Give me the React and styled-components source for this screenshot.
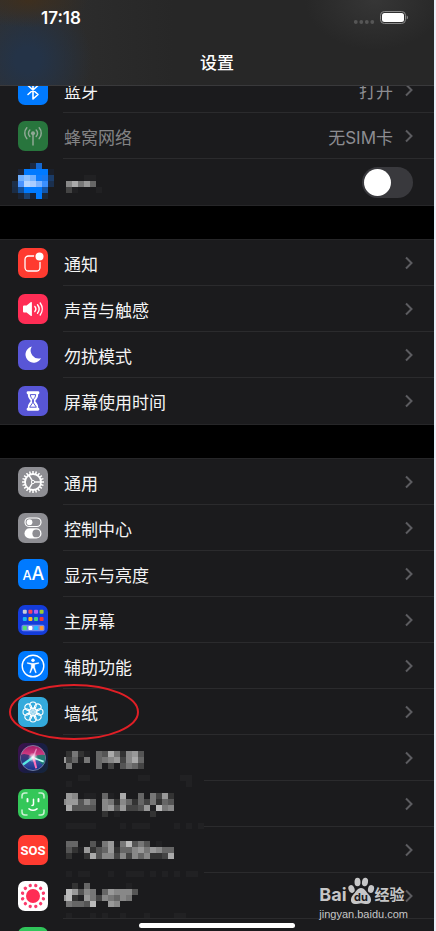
import React from 'react'
import styled, { createGlobalStyle } from 'styled-components'

const GlobalStyle = createGlobalStyle`
  * {
    box-sizing: border-box;
  }
  body {
    margin: 0;
    background: #e9effa;
    font-family: Inter, "Noto Sans CJK SC", sans-serif;
  }
`

const Phone = styled.div`
  position: relative;
  display: flex;
  flex-direction: column;
  height: 100vh;
  margin-right: 2px;
  overflow: hidden;
  background: #000;
  color: #f4f4f5;
`

const Header = styled.header`
  position: relative;
  z-index: 1;
  flex: none;
  border-bottom: 1px solid #39393b;
  background:
    radial-gradient(ellipse 60px 28px at 28px 0, #3e2f1e, transparent),
    radial-gradient(ellipse 64px 64px at 28px 60px, #243347 20%, transparent),
    radial-gradient(ellipse 70px 50px at 375px 0, #363636, transparent),
    linear-gradient(90deg, #303030, #272727 40%, #272727);
`

const StatusBar = styled.div`
  display: flex;
  align-items: center;
  justify-content: space-between;
  height: 36px;
  padding: 0 26px 0 41px;
  color: #fff;
  font-size: 17px;
  font-weight: 600;
`

const Title = styled.h1`
  margin: 0;
  padding: 15px 0 9px;
  color: #fff;
  font-size: 17px;
  font-weight: 500;
  line-height: 25px;
  text-align: center;
`

const List = styled.main`
  display: flex;
  flex-direction: column;
  gap: 35px;
  margin-top: -19px;
`

const Group = styled.ul`
  margin: 0;
  padding: 0;
  list-style: none;
  background: #1b1b1d;
  box-shadow: 0 -1px #262628, 0 1px #262628;
`

const Item = styled.li`
  position: relative;
  height: 46px;

  &:not(:last-child)::after {
    content: "";
    position: absolute;
    right: 0;
    bottom: 0;
    left: ${(p) => (p.$blurred ? '204px' : '63px')};
    height: 1px;
    background: #2b2b2d;
  }
`

const Row = styled.a`
  display: flex;
  align-items: center;
  height: 46px;
  padding: 0 21px 0 18px;
  color: inherit;
  font-size: 17px;
  line-height: 24px;
  text-decoration: none;
`

const Tile = styled.svg`
  flex: none;
  width: 30px;
  height: 30px;
  margin-right: 16px;
  border-radius: 7px;
  background: ${(p) => p.$bg};
`

const Label = styled.span`
  flex: 1;
  padding-top: 3px;
  color: ${(p) => (p.$off ? '#838385' : 'inherit')};
`

const Value = styled.span`
  margin-right: 12px;
  padding-top: 3px;
  color: #8d8d92;
`

const Arrow = styled.svg`
  flex: none;
  width: 8px;
  height: 14px;
  fill: none;
  stroke: #5c5c60;
  stroke-width: 2;
`

const Switch = styled.input`
  appearance: none;
  width: 51px;
  height: 31px;
  margin: 0;
  padding: 2px;
  border-radius: 16px;
  background: #39393d;

  &::before {
    content: "";
    display: block;
    width: 27px;
    height: 27px;
    border-radius: 50%;
    background: #fff;
  }
`

const Blurred = styled.svg`
  display: block;
  width: 136px;
  height: 46px;
  margin-right: auto;
  overflow: visible;
`

const BlurredTile = styled.svg`
  width: 42px;
  height: 46px;
  margin: 0 10px 0 -6px;
`

const Ring = styled.svg`
  position: absolute;
  z-index: 1;
  top: -6px;
  left: 8px;
  width: 132px;
  height: 60px;
  fill: none;
  stroke: #e01f26;
  stroke-width: 2;
  pointer-events: none;
`

const HomeBar = styled.div`
  position: absolute;
  bottom: 3px;
  left: 50%;
  width: 156px;
  height: 5px;
  border-radius: 3px;
  background: #fff;
  transform: translateX(-50%);
`

const Watermark = styled.div`
  position: absolute;
  right: 26px;
  bottom: 9px;
  color: #c6c6c7;
  font-family: "Liberation Sans", sans-serif;
  font-size: 11px;
  line-height: 16px;
`

const Brand = styled.div`
  display: flex;
  align-items: flex-end;
  font-family: Inter, "Noto Sans CJK SC", sans-serif;
  font-size: 18px;
  font-weight: 700;
  line-height: 22px;

  span:last-child {
    font-size: 15px;
  }
`

const Paw = styled.svg`
  width: 28px;
  height: 30px;
  fill: #c6c6c7;
`

// each digit is the grey level of one 6px cell, the first column is cut by the left edge
function Mosaic({ rows, top }) {
  return (
    <Blurred viewBox="4 0 136 46" role="img" aria-hidden="true" shapeRendering="crispEdges">
      <svg x="4" y="0" width="150" height="60" viewBox="4 0 150 60">
        {rows.map((row, y) =>
          row.split('').map((c, x) =>
            c === '.' ? null : (
              <rect key={x + '-' + y} x={x * 6} y={top + y * 6} width="6" height="6" fill={c === '2' ? '#212123' : '#' + c + c + c} />
            )
          )
        )}
      </svg>
    </Blurred>
  )
}

const wifiCells = [
  ['', '', '', '#1c2a44', '#1668d0', '', ''],
  ['', '#1b2438', '#007aff', '#007aff', '#007aff', '#007aff', '#1a202c'],
  ['', '#6fb0ff', '#8cc0ff', '#6fb0ff', '#0a7cff', '#1778ee', '#1b3c68'],
  ['#1d2f48', '#4a94ff', '#b5d5ff', '#a8ccff', '#7ab2ff', '#3a90ff', '#1b304e'],
  ['#1b2c44', '#14509a', '#007aff', '#007aff', '#007aff', '#1456a8', ''],
  ['', '#1b2434', '#1b4272', '#16233a', '#007aff', '#1b2838', ''],
]

function AppTile() {
  return (
    <BlurredTile viewBox="0 0 42 46" shapeRendering="crispEdges" aria-hidden="true">
      {wifiCells.map((row, y) =>
        row.map((c, x) => c && <rect key={x + '-' + y} x={x * 6} y={4 + y * 6} width="6" height="6" fill={c} />)
      )}
    </BlurredTile>
  )
}

const Icon = ({ bg, children }) => (
  <Tile viewBox="0 0 30 30" $bg={bg} aria-hidden="true">
    {children}
  </Tile>
)

const line = { fill: 'none', stroke: '#fff', strokeLinecap: 'round', strokeLinejoin: 'round' }
const around = (n) => Array.from({ length: n }, (_, i) => (i * 360) / n)

const BluetoothIcon = () => (
  <Icon bg="#007aff">
    <path {...line} strokeWidth="1.6" d="M10 10.5l10 9-5 4.5V6l5 4.5-10 9" />
  </Icon>
)

const CellularIcon = () => (
  <Icon bg="#28753d">
    <g {...line} stroke="#8fa895" strokeWidth="1.5">
      <path d="M15 13v11M11.8 15.4a4.5 4.5 0 0 1 0-6.4M18.2 15.4a4.5 4.5 0 0 0 0-6.4M8.8 17.6a8.2 8.2 0 0 1 0-10.8M21.2 17.6a8.2 8.2 0 0 0 0-10.8" />
    </g>
    <circle cx="15" cy="12.2" r="2" fill="#8fa895" />
  </Icon>
)

const NotifyIcon = () => (
  <Icon bg="#ff3b30">
    <rect {...line} x="7" y="8" width="15" height="15" rx="3.5" strokeWidth="1.3" />
    <circle cx="21.5" cy="8.5" r="5.5" fill="#ff3b30" />
    <circle cx="21.5" cy="8.5" r="4" fill="#fff" />
  </Icon>
)

const SoundIcon = () => (
  <Icon bg="#ff2d55">
    <path fill="#fff" d="M5 12.4q0-1 1-1h2.6l4-3.2q1.3-.8 1.3.6v12.4q0 1.4-1.3.6l-4-3.2H6q-1 0-1-1z" />
    <path {...line} strokeWidth="1.4" d="M16.8 12.4a4 4 0 0 1 0 5.2M19.5 10.7a7 7 0 0 1 0 8.6M22.2 9a10 10 0 0 1 0 12" />
  </Icon>
)

const MoonIcon = () => (
  <Icon bg="#5856d6">
    <path fill="#fff" d="M13.8 6.5A8.2 8.2 0 1 0 23 18.2a8 8 0 0 1-9.2-11.7z" />
  </Icon>
)

const HourglassIcon = () => (
  <Icon bg="#5856d6">
    <path fill="#fff" d="M10 5.3h10q1.4 0 1.4 1.4T20.2 8.2c0 3-1 4.3-3 6.8 2 2.5 3 3.8 3 6.8q1.2.1 1.2 1.5T20 24.7H10q-1.400 0-1.400-1.400t1.200-1.500c0-3 1-4.300 3-6.800-2-2.500-3-3.800-3-6.800Q8.600 8.100 8.600 6.700T10 5.300z" />
    <path fill="none" stroke="#5856d6" strokeWidth="1" d="M12.300 8.600h5.400c-.2 2.200-1 3.300-2.300 5v3.200l3 4.400h-6.800l3-4.400v-3.200c-1.300-1.700-2.100-2.800-2.300-5z" />
  </Icon>
)

const GearIcon = () => (
  <Icon bg="#8e8e93">
    <g fill="none" stroke="#fff">
      <circle cx="15" cy="15" r="8" strokeWidth="1.8" />
      {around(20).map((a) => (
        <path key={a} strokeWidth="1.5" d="M15 4v3" transform={`rotate(${a} 15 15)`} />
      ))}
      <circle cx="15" cy="15" r="1.6" strokeWidth="1" />
      <path strokeWidth="1.4" d="M16.5 15H23M14.200 13.700l-3.300-5.600M14.200 16.300l-3.300 5.600" />
    </g>
  </Icon>
)

const ControlIcon = () => (
  <Icon bg="#8e8e93">
    <rect {...line} x="7" y="5" width="16" height="8.5" rx="4.25" strokeWidth="1.2" />
    <circle cx="11.5" cy="9.25" r="2.9" fill="#fff" />
    <rect x="6.5" y="15.3" width="17" height="10.2" rx="5.1" fill="#fff" />
    <circle cx="18.3" cy="20.4" r="3.9" fill="#8e8e93" />
  </Icon>
)

const DisplayIcon = () => (
  <Icon bg="#007aff">
    <text y="21" fill="#fff" fontFamily="Inter, sans-serif" fontWeight="500">
      <tspan x="4.500" fontSize="13">A</tspan>
      <tspan x="13.500" fontSize="18">A</tspan>
    </text>
  </Icon>
)

const homeDots = [
  ['#c8cdd8', '#f8405c', '#b060f0', '#9ccc30'],
  ['#18b4f0', '#ffb81c', '#40d080', '#f03838'],
  ['#50e070', '#ffffff', '#20b8ff', '#ff9830'],
]

const HomeIcon = () => (
  <Icon bg="#143cda">
    <rect x="3.5" y="19.8" width="23" height="6.4" rx="1.8" fill="#7088ec" />
    {homeDots.map((row, y) =>
      row.map((c, x) => (
        <rect key={x + '-' + y} x={4.8 + x * 5.6} y={[4.8, 12, 21][y]} width="4" height="4" rx="1" fill={c} />
      ))
    )}
  </Icon>
)

const AccessIcon = () => (
  <Icon bg="#007aff">
    <circle {...line} cx="15" cy="15" r="10.8" strokeWidth="1.4" />
    <circle cx="15" cy="9.2" r="1.7" fill="#fff" />
    <path fill="#fff" stroke="#fff" strokeWidth=".3" strokeLinejoin="round" d="M9.200 11.600l4.600.7h2.400l4.600-.7.1.8-4.100 1.100v3l1.600 5.200-.9.3-2.200-5h-.6l-2.200 5-.9-.3 1.600-5.200v-3l-4.100-1.100z" />
  </Icon>
)

const WallpaperIcon = () => (
  <Icon bg="#34aadc">
    <g fill="none" stroke="#fff" strokeWidth="1.1">
      {around(8).map((a) => (
        <circle key={a} cx="15" cy="8.2" r="3.2" transform={`rotate(${a} 15 15)`} />
      ))}
      {around(8).map((a) => (
        <circle key={a} cx="15" cy="12.2" r="1.700" strokeWidth=".6" transform={`rotate(${a + 22.500} 15 15)`} />
      ))}
    </g>
  </Icon>
)

const SiriIcon = () => (
  <Icon bg="linear-gradient(120deg, #40104e, #1a1c44 50%, #14263c)">
    <defs>
      <linearGradient id="orb" x1="0" y1="0" x2="0" y2="1">
        <stop offset="0" stopColor="#a01c68" />
        <stop offset=".35" stopColor="#cf3a80" />
        <stop offset=".6" stopColor="#3c58a8" />
        <stop offset="1" stopColor="#1a2c88" />
      </linearGradient>
      <radialGradient id="glow">
        <stop offset="0" stopColor="#fff" />
        <stop offset="1" stopColor="#fff" stopOpacity="0" />
      </radialGradient>
    </defs>
    <circle cx="15" cy="15" r="12.5" fill="url(#orb)" stroke="#8c9cb8" strokeWidth=".7" />
    <path fill="#203070" opacity=".75" d="M3 12q4-3 11 2L4 20q-2-4-1-8z" />
    <path fill="#16806c" opacity=".85" d="M27 12q-6-1-11 2l9 8q3-4 2-10z" />
    <path fill="#58e8e0" d="M15 13L4.500 20.500l1.200 2L16 15z" />
    <path fill="#b8fff0" d="M14 13.500l12 4.200-.6 1.700L15 15.500z" />
    <path fill="#ff70b8" d="M14 14l3.300 11.500 1.900-.6L16.500 14z" />
    <path fill="#ee9cd0" opacity=".8" d="M14.200 14L18 5.500l1 .4L16.300 14z" />
    <circle cx="15" cy="14.5" r="5" fill="url(#glow)" />
  </Icon>
)

const FaceIcon = () => (
  <Icon bg="#34c759">
    <g {...line} strokeWidth="1.5">
      <path opacity=".75" d="M4 9V7q0-3 3-3h2M21 4h2q3 0 3 3v2M26 21v2q0 3-3 3h-2M9 26H7q-3 0-3-3v-2" />
      <path strokeWidth="1.9" d="M9.500 10v2.400M20.500 10v2.400" />
      <path d="M15.500 10.300v5q0 1.200-1.500 1.200M11 19.800q4 3 8 0" />
    </g>
  </Icon>
)

const SosIcon = () => (
  <Icon bg="#ff3b30">
    <text x="15" y="20" fill="#fff" textAnchor="middle" fontFamily="Roboto, sans-serif" fontSize="13" fontWeight="700">
      SOS
    </text>
  </Icon>
)

const ExposureIcon = () => (
  <Icon bg="#fff">
    <circle cx="15" cy="15" r="7" fill="#ff2d55" />
    {around(12).map((a) => (
      <circle key={a} cx="15" cy="4.2" r="1.7" fill="#fa3c6c" transform={`rotate(${a + 15} 15 15)`} />
    ))}
  </Icon>
)

const BatteryIcon = () => (
  <svg width="54" height="16" viewBox="0 0 54 16" role="img" aria-label="battery">
    {[1.8, 7.3, 12.8, 18.3].map((x) => (
      <circle key={x} cx={x} cy="12" r="1.9" fill="#565656" />
    ))}
    <rect x="26.5" y="1.5" width="25" height="12" rx="3.8" fill="none" stroke="#8a8a8a" />
    <rect x="28" y="3" width="22" height="9" rx="2.5" fill="#fff" />
    <path d="M52.700 5.500q1.300.5 1.300 2t-1.300 2z" fill="#8a8a8a" />
  </svg>
)

const groups = [
  [
    { icon: BluetoothIcon, label: '蓝牙', value: '打开' },
    { icon: CellularIcon, label: '蜂窝网络', value: '无SIM卡', off: true },
    { icon: AppTile, toggle: true, top: 16, mosaic: ['....22', '.8a796', '.42...2'] },
  ],
  [
    { icon: NotifyIcon, label: '通知' },
    { icon: SoundIcon, label: '声音与触感' },
    { icon: MoonIcon, label: '勿扰模式' },
    { icon: HourglassIcon, label: '屏幕使用时间' },
  ],
  [
    { icon: GearIcon, label: '通用' },
    { icon: ControlIcon, label: '控制中心' },
    { icon: DisplayIcon, label: '显示与亮度' },
    { icon: HomeIcon, label: '主屏幕' },
    { icon: AccessIcon, label: '辅助功能' },
    { icon: WallpaperIcon, label: '墙纸', ring: true },
    {
      icon: SiriIcon,
      blurred: true,
      top: 16,
      mosaic: ['.3732.65a73895', '94627.678948a6', '.7....6.4.5764', '', '...22........22.....22', '.2...................2'],
    },
    {
      icon: FaceIcon,
      blurred: true,
      top: 12,
      mosaic: ['.98.22.62.a..6.7493', '899586.873863647365', '.a5555.895944592b78', '.......3.2.....3', '', '.22222....2.222....2.2.2'],
    },
    {
      icon: SosIcon,
      blurred: true,
      top: 14,
      mosaic: ['.66..527927b575.2', '.532935693668979866', '.3..3a588484868334a', '', '', '.2.22...2..222.2.2.2.22'],
    },
    {
      icon: ExposureIcon,
      top: 10,
      mosaic: ['..3.6......2', '.b9587.698885', '9b3297487687', '.7665b..98', '', '.2...2.2..2...2....22'],
    },
    { icon: () => <Icon bg="#30c45a" />, label: '' },
  ],
]

function SettingRow({ item }) {
  const ItemIcon = item.icon
  return (
    <Item $blurred={item.blurred}>
      <Row as={item.toggle ? 'label' : 'a'} href={item.toggle ? undefined : '#'}>
        <ItemIcon />
        {item.mosaic ? <Mosaic rows={item.mosaic} top={item.top} /> : <Label $off={item.off}>{item.label}</Label>}
        {item.value && <Value>{item.value}</Value>}
        {item.toggle ? (
          <Switch type="checkbox" role="switch" />
        ) : (
          <Arrow viewBox="0 0 8 14">
            <path d="M1 1.500L6.500 7 1 12.500" />
          </Arrow>
        )}
      </Row>
      {item.ring && (
        <Ring viewBox="0 0 132 60">
          <ellipse cx="66" cy="29" rx="64" ry="27" />
        </Ring>
      )}
    </Item>
  )
}

function App() {
  return (
    <Phone>
      <GlobalStyle />
      <Header>
        <StatusBar>
          <span>17:18</span>
          <BatteryIcon />
        </StatusBar>
        <Title>设置</Title>
      </Header>
      <List>
        {groups.map((items, i) => (
          <Group key={i}>
            {items.map((item, j) => (
              <SettingRow key={j} item={item} />
            ))}
          </Group>
        ))}
      </List>
      <Watermark>
        <Brand>
          <span>Bai</span>
          <Paw viewBox="0 0 28 30">
            <ellipse cx="4.500" cy="13" rx="3" ry="4" transform="rotate(-20 4.500 13)" />
            <ellipse cx="10.500" cy="6" rx="3" ry="4.300" />
            <ellipse cx="18" cy="6" rx="3" ry="4.300" transform="rotate(10 18 6)" />
            <ellipse cx="24" cy="13" rx="3" ry="4" transform="rotate(15 24 13)" />
            <path d="M14 12c4 0 5 4 8 7s3 9-2 9c-3 0-4-.8-6-.8s-3 .8-6 .8c-5 0-5-6-2-9s4-7 8-7z" />
            <text x="14" y="25" textAnchor="middle" fill="#1b1b1d" fontSize="11" fontWeight="700">
              du
            </text>
          </Paw>
          <span>经验</span>
        </Brand>
        <div>jingyan.baidu.com</div>
      </Watermark>
      <HomeBar />
    </Phone>
  )
}

export default App
